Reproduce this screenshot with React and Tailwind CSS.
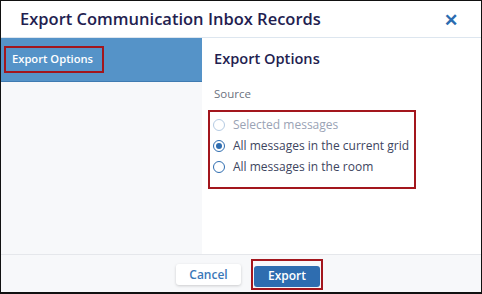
import React from 'react'

const Radio = ({ checked, disabled, label }) => (
  <label className="flex items-center gap-[8px] h-[21px]">
    <span
      className={
        'w-[12px] h-[12px] rounded-full border flex items-center justify-center bg-white ' +
        (disabled ? 'border-[#b5cbe3]' : 'border-[#2f6db0]')
      }
    >
      {checked && <span className="w-[6px] h-[6px] rounded-full bg-[#2f6db0]" />}
    </span>
    <span className={'text-[12px] ' + (disabled ? 'text-[#9aa3b5]' : 'text-[#3d4560]')}>{label}</span>
  </label>
)

const App = () => {
  return (
    <div
      className="w-[482px] h-[294px] flex flex-col border border-b-2 border-[#111] bg-white"
      style={{ fontFamily: '"Open Sans", "Noto Sans", sans-serif' }}
    >
      {/* header */}
      <div className="h-[37px] flex items-center justify-between pl-[19px] pr-[23px] border-b border-[#dde6ef] shrink-0">
        <h1 className="text-[16.5px] font-semibold text-[#231e50]">Export Communication Inbox Records</h1>
        <span className="text-[#2b6cb0] text-[17px] font-semibold leading-none">✕</span>
      </div>

      <div className="flex flex-1 min-h-0">
        {/* left nav */}
        <div className="w-[201px] bg-[#f7f8fa] shrink-0">
          <div className="h-[44px] bg-[#5593c8] border-b border-[#3f7bb1] flex items-center pl-[3px]">
            <div className="border-2 border-[#a3161d] h-[27px] w-[100px] flex items-center pl-[6px]">
              <span className="text-white text-[11.2px] font-semibold">Export Options</span>
            </div>
          </div>
        </div>

        {/* content */}
        <div className="flex-1 pl-[12px] pt-[8px]">
          <h2 className="text-[14.6px] font-semibold text-[#231e50] leading-[24px]">Export Options</h2>
          <div className="text-[11.5px] text-[#6b7280] mt-[15px]">Source</div>
          <div className="mt-[8px] -ml-[6px] w-[208px] h-[79px] border-2 border-[#a3161d] pl-[3px] pt-[2px]">
            <Radio disabled label="Selected messages" />
            <Radio checked label="All messages in the current grid" />
            <Radio label="All messages in the room" />
          </div>
        </div>
      </div>

      {/* footer */}
      <div className="h-[38px] shrink-0 border-t border-[#e5e7eb] bg-[#f7f8fa] flex items-center justify-center gap-[10px] pl-[17px] pt-[2px]">
        <button className="w-[65px] h-[21px] bg-white rounded-[3px] shadow-[0_1px_3px_rgba(0,0,0,0.18)] text-[12px] font-semibold text-[#3b78b8]">
          Cancel
        </button>
        <div className="border-2 border-[#a3161d] p-px">
          <button className="w-[66px] h-[21px] bg-[#2e6db0] rounded-[3px] text-[12px] font-semibold text-white">
            Export
          </button>
        </div>
      </div>
    </div>
  )
}

export default App
